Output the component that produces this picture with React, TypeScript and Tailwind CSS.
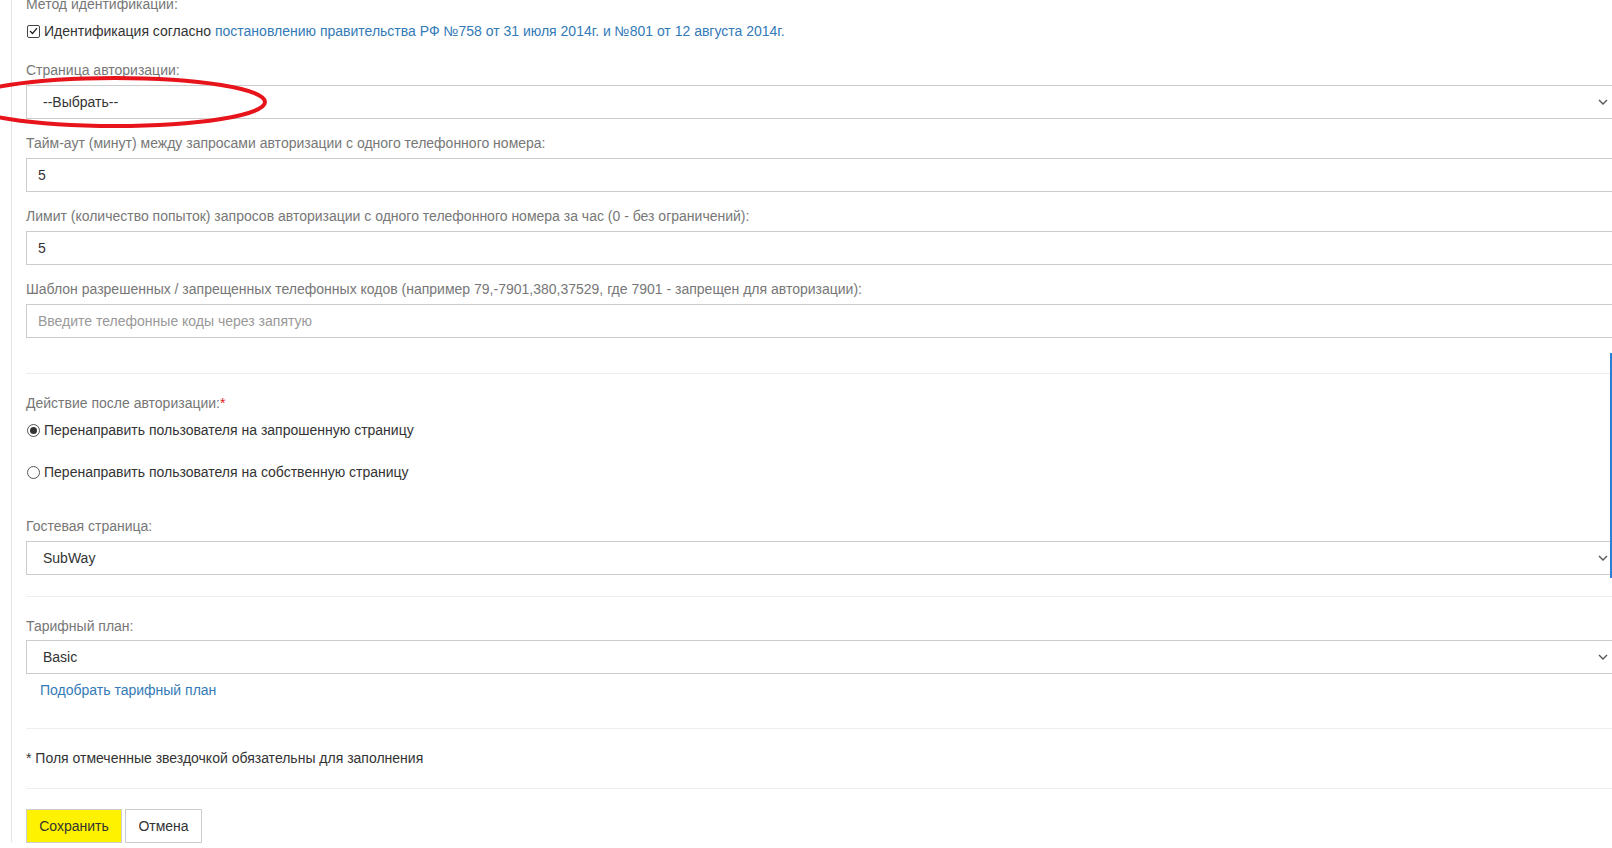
import React from "react";

const font = { fontFamily: '"Liberation Sans", Arial, sans-serif' };

function Label({ children, className = "" }: { children: React.ReactNode; className?: string }) {
  return <div className={`h-5 leading-5 text-[14px] text-[#777] ${className}`}>{children}</div>;
}

function TextInput({ value, placeholder, className = "" }: { value?: string; placeholder?: string; className?: string }) {
  return (
    <div className={`flex h-[34px] items-center border border-[#ccc] bg-white pl-[11px] text-[14px] ${className}`}>
      {value ? <span className="text-[#333]">{value}</span> : <span className="text-[#999]">{placeholder}</span>}
    </div>
  );
}

function Select({ value, className = "" }: { value: string; className?: string }) {
  return (
    <div className={`flex h-[34px] items-center justify-between border border-[#ccc] bg-white pl-4 pr-[6px] text-[14px] text-[#333] ${className}`}>
      <span>{value}</span>
      <svg width="10" height="6" viewBox="0 0 10 6" className="mr-[1px]">
        <path d="M1 1 L5 5 L9 1" fill="none" stroke="#555" strokeWidth="1.4" />
      </svg>
    </div>
  );
}

function Radio({ checked, label, className = "" }: { checked?: boolean; label: string; className?: string }) {
  return (
    <div className={`flex h-5 items-center text-[14px] text-[#333] ${className}`}>
      <span className="ml-px mr-[4px] flex h-[13px] w-[13px] items-center justify-center rounded-full border border-[#555] bg-white">
        {checked && <span className="h-[7px] w-[7px] rounded-full bg-[#333]" />}
      </span>
      {label}
    </div>
  );
}

export default function App() {
  return (
    <div className="relative h-[848px] w-[1612px] overflow-hidden bg-white" style={font}>
      <div className="ml-[11px] h-full border-l border-[#e3e3e3] pl-[14px]">
        <div className="mt-[-6px] w-[1590px]">
          <Label>Метод идентификации:</Label>

          <div className="mt-[7px] flex h-5 items-center text-[14px] text-[#333]">
            <span className="ml-px mr-[4px] flex h-[13px] w-[13px] items-center justify-center rounded-[2px] border border-[#444] bg-white">
              <svg width="9" height="8" viewBox="0 0 9 8">
                <path d="M1 4 L3.5 6.5 L8 1.2" fill="none" stroke="#222" strokeWidth="1.3" />
              </svg>
            </span>
            <span>Идентификация согласно&nbsp;</span>
            <span className="text-[#337ab7]">
              постановлению правительства РФ №758 от 31 июля 2014г. и №801 от 12 августа 2014г.
            </span>
          </div>

          <Label className="mt-[19px]">Страница авторизации:</Label>
          <Select value="--Выбрать--" className="mt-[5px]" />

          <Label className="mt-[14px]">Тайм-аут (минут) между запросами авторизации с одного телефонного номера:</Label>
          <TextInput value="5" className="mt-[5px]" />

          <Label className="mt-[14px]">
            Лимит (количество попыток) запросов авторизации с одного телефонного номера за час (0 - без ограничений):
          </Label>
          <TextInput value="5" className="mt-[5px]" />

          <Label className="mt-[14px]">
            Шаблон разрешенных / запрещенных телефонных кодов (например 79,-7901,380,37529, где 7901 - запрещен для авторизации):
          </Label>
          <TextInput placeholder="Введите телефонные коды через запятую" className="mt-[5px]" />

          <div className="mt-[35px] h-px bg-[#eee]" />

          <Label className="mt-[19px]">
            Действие после авторизации:<span className="text-[#e02020]">*</span>
          </Label>
          <Radio checked label="Перенаправить пользователя на запрошенную страницу" className="mt-[7px]" />
          <Radio label="Перенаправить пользователя на собственную страницу" className="mt-[22px]" />

          <Label className="mt-[34px]">Гостевая страница:</Label>
          <Select value="SubWay" className="mt-[5px]" />

          <div className="mt-[21px] h-px bg-[#eee]" />

          <Label className="mt-[19px]">Тарифный план:</Label>
          <Select value="Basic" className="mt-[4px]" />
          <div className="mt-[6px] h-5 pl-[14px] text-[14px] leading-5 text-[#337ab7]">Подобрать тарифный план</div>

          <div className="mt-[28px] h-px bg-[#eee]" />

          <div className="mt-[19px] h-5 text-[14px] leading-5 text-[#333]">
            * Поля отмеченные звездочкой обязательны для заполнения
          </div>

          <div className="mt-5 h-px bg-[#eee]" />

          <div className="mt-5 flex gap-[3px]">
            <button className="h-[34px] w-[96px] border border-[#ccc] bg-[#fff200] text-[14px] text-[#333]">Сохранить</button>
            <button className="h-[34px] w-[77px] border border-[#ccc] bg-white text-[14px] text-[#333]">Отмена</button>
          </div>
        </div>
      </div>

      {/* red hand-drawn mark around the auth page select */}
      <svg className="pointer-events-none absolute left-0 top-0" width="280" height="140">
        <ellipse cx="115" cy="102" rx="150" ry="24" fill="none" stroke="#e8141c" strokeWidth="4" />
      </svg>

      <div className="absolute right-0 top-[353px] h-[225px] w-[2px] bg-[#2b7fd4]" />
    </div>
  );
}
